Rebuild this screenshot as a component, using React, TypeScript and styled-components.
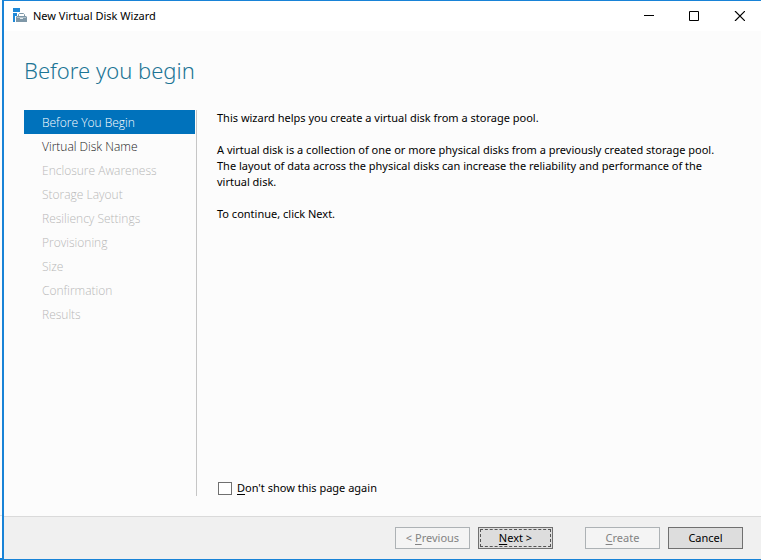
import React, { useState } from 'react';
import styled, { createGlobalStyle } from 'styled-components';

const GlobalStyle = createGlobalStyle`
  * { box-sizing: border-box; }
  html, body, #root { height: 100%; }
  body {
    margin: 0;
    background: #ffffff;
    font: 400 11px/16px "Segoe UI", "Noto Sans", "Open Sans", sans-serif;
    color: #000000;
  }
`;

const Desktop = styled.div`
  display: grid;
  grid-template-columns: 2px minmax(0, 1fr);
  min-height: 100%;
`;

const BackWindow = styled.div`
  display: flex;
  flex-direction: column;
  border-bottom: 2px solid #1883d7;
`;

const BackBody = styled.div`
  flex: 1;
  background: #fcfcfc;
`;

const BackFooter = styled.div`
  height: 43px;
  border-top: 1px solid #dfdfdf;
`;

const Window = styled.main`
  display: flex;
  flex-direction: column;
  border: 1px solid #1883d7;
  border-left-width: 2px;
  border-right: 0;
  background: #fcfcfc;
`;

const TitleBar = styled.header`
  display: flex;
  align-items: center;
  height: 30px;
  padding-left: 8px;
  background: #ffffff;
`;

const WindowTitle = styled.span`
  flex: 1;
  padding-left: 5px;
`;

const CaptionButton = styled.button`
  display: grid;
  place-items: center;
  width: 45px;
  height: 29px;
  padding: 0;
  border: 0;
  background: transparent;
`;

const Heading = styled.h1`
  margin: 0;
  padding: 23px 20px 24px;
  font: 300 22px/32px "Segoe UI Light", "Noto Sans", sans-serif;
  color: #1d7595;
`;

const Body = styled.div`
  flex: 1;
  display: flex;
  padding: 0 20px 20px;
`;

const Steps = styled.nav`
  flex: none;
  width: 173px;
  padding-right: 1px;
  border-right: 1px solid #c6c6c6;
`;

const StepList = styled.ol`
  margin: 0;
  padding: 0;
  list-style: none;
`;

const Step = styled.button<{ $active?: boolean }>`
  display: block;
  width: 100%;
  height: 24px;
  padding: 2px 18px 0;
  border: 0;
  background: ${(p) => (p.$active ? '#0072bc' : 'transparent')};
  color: ${(p) => (p.$active ? '#ffffff' : '#1a1a1a')};
  font: 300 12px/22px "Segoe UI Light", "Open Sans", sans-serif;
  text-align: left;

  &:disabled { color: #b8b8b8; }
`;

const Content = styled.section`
  flex: 1;
  display: flex;
  flex-direction: column;
  justify-content: space-between;
  padding-left: 20px;
`;

const Copy = styled.div`
  display: grid;
  gap: 16px;
  max-width: 512px;
`;

const Paragraph = styled.p`
  margin: 0;
`;

const CheckLabel = styled.label`
  display: flex;
  align-items: center;
  gap: 5px;
  padding-left: 1px;
`;

const CheckBox = styled.input`
  appearance: none;
  width: 14px;
  height: 13px;
  margin: 0;
  border: 1px solid #707070;
  background: #ffffff;

  &:checked { background: #0072bc; box-shadow: inset 0 0 0 2px #ffffff; }
`;

const Footer = styled.footer`
  display: flex;
  justify-content: flex-end;
  gap: 8px;
  height: 43px;
  padding: 10px 18px;
  border-top: 1px solid #dadada;
  background: #f0f0f0;
`;

const PushButton = styled.button<{ $primary?: boolean; $apart?: boolean }>`
  width: 75px;
  height: 22px;
  margin-left: ${(p) => (p.$apart ? '24px' : '0')};
  padding: 0;
  border: 1px solid #707070;
  outline: ${(p) => (p.$primary ? '1px dashed #555555' : 'none')};
  outline-offset: -3px;
  background: #dddddd;
  color: #000000;
  font: inherit;

  &:disabled {
    border-color: #adb2b5;
    background: #f4f4f4;
    color: #838383;
  }
`;

const AccessKey = styled.span`
  text-decoration: underline;
  text-underline-offset: 2px;
`;

const steps = [
  'Before You Begin',
  'Virtual Disk Name',
  'Enclosure Awareness',
  'Storage Layout',
  'Resiliency Settings',
  'Provisioning',
  'Size',
  'Confirmation',
  'Results',
];

function WizardIcon() {
  return (
    <svg width="16" height="16" viewBox="0 0 16 16" aria-hidden="true">
      <path d="M1 0h7v4H1zM1 5h4v3H3v6H1z" fill="#1e88d8" />
      <path d="M6.500 8V6.500L7.500 5.500h4l1 1V8" fill="none" stroke="#7f98a8" />
      <path d="M5 8h9l1 1v5H4V9z" fill="#7f98a8" />
      <path d="M5 9.500h9" stroke="#b4c3cc" />
      <path d="M8 10h3v1H8z" fill="#e4ecf0" />
    </svg>
  );
}

function MinimizeIcon() {
  return (
    <svg width="10" height="10" viewBox="0 0 10 10" aria-hidden="true">
      <path d="M0 4h10v1H0z" />
    </svg>
  );
}

function MaximizeIcon() {
  return (
    <svg width="11" height="10" viewBox="0 0 11 10" aria-hidden="true">
      <path d="M1.500.5h9v9h-9z" fill="none" stroke="#000" />
    </svg>
  );
}

function CloseIcon() {
  return (
    <svg width="12" height="10" viewBox="0 0 12 10" aria-hidden="true">
      <path d="M2 0l10 10M12 0L2 10" fill="none" stroke="#000" strokeWidth="1.200" />
    </svg>
  );
}

export default function App() {
  const [hidePage, setHidePage] = useState(false);
  return (
    <>
      <GlobalStyle />
      <Desktop>
        <BackWindow>
          <BackBody />
          <BackFooter />
        </BackWindow>
        <Window>
          <TitleBar>
            <WizardIcon />
            <WindowTitle>New Virtual Disk Wizard</WindowTitle>
            <CaptionButton aria-label="Minimize"><MinimizeIcon /></CaptionButton>
            <CaptionButton aria-label="Maximize"><MaximizeIcon /></CaptionButton>
            <CaptionButton aria-label="Close"><CloseIcon /></CaptionButton>
          </TitleBar>
          <Heading>Before you begin</Heading>
          <Body>
            <Steps aria-label="Wizard steps">
              <StepList>
                {steps.map((name, i) => (
                  <li key={name}>
                    <Step $active={i === 0} disabled={i > 1} aria-current={i === 0 ? 'step' : undefined}>
                      {name}
                    </Step>
                  </li>
                ))}
              </StepList>
            </Steps>
            <Content>
              <Copy>
                <Paragraph>This wizard helps you create a virtual disk from a storage pool.</Paragraph>
                <Paragraph>
                  A virtual disk is a collection of one or more physical disks from a previously created
                  storage pool. The layout of data across the physical disks can increase the reliability
                  and performance of the virtual disk.
                </Paragraph>
                <Paragraph>To continue, click Next.</Paragraph>
              </Copy>
              <CheckLabel>
                <CheckBox
                  type="checkbox"
                  checked={hidePage}
                  onChange={(e) => setHidePage(e.target.checked)}
                />
                <span><AccessKey>D</AccessKey>on't show this page again</span>
              </CheckLabel>
            </Content>
          </Body>
          <Footer>
            <PushButton disabled>&lt; <AccessKey>P</AccessKey>revious</PushButton>
            <PushButton $primary><AccessKey>N</AccessKey>ext &gt;</PushButton>
            <PushButton $apart disabled><AccessKey>C</AccessKey>reate</PushButton>
            <PushButton>Cancel</PushButton>
          </Footer>
        </Window>
      </Desktop>
    </>
  );
}
